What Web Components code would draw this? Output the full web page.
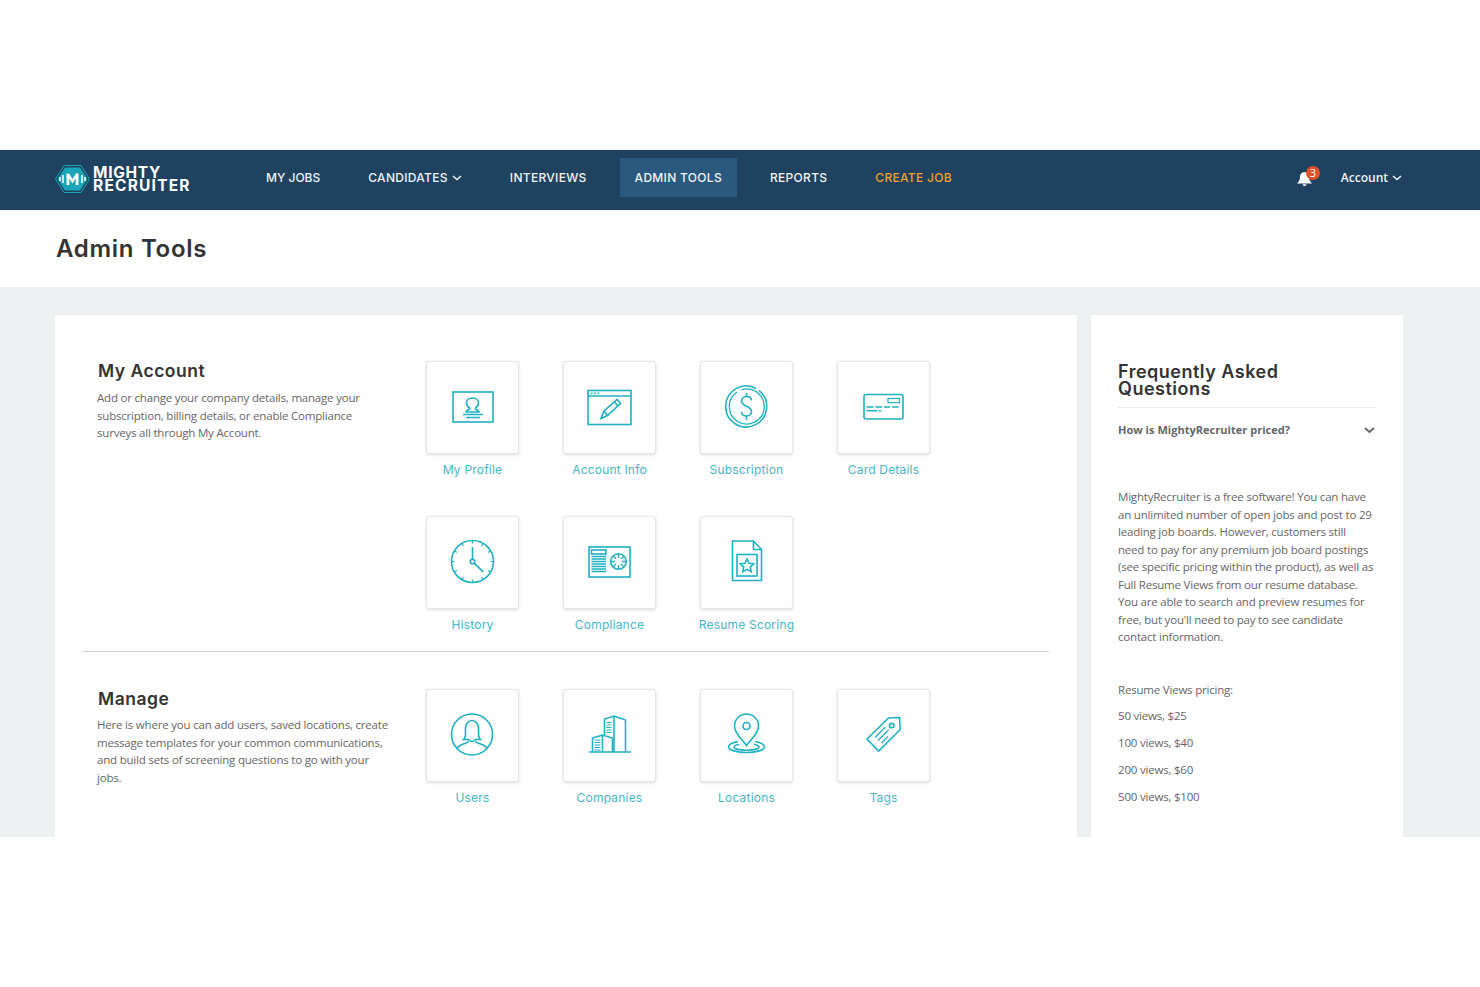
<!DOCTYPE html>
<html lang="en">
<head>
<meta charset="utf-8">
<title>Admin Tools</title>
<style>
  html, body { margin: 0; background: #fff; }
  body { font-family: "Open Sans", "Liberation Sans", sans-serif; }
  mr-app { height: 987px; }
</style>
</head>
<body>
<mr-app>
  <mr-navbar slot="nav"></mr-navbar>
  <mr-title slot="title">Admin Tools</mr-title>

  <mr-section heading="My Account">
    Add or change your company details, manage your<br>
    subscription, billing details, or enable Compliance<br>
    surveys all through My Account.
    <mr-tile slot="tiles" icon="profile">My Profile</mr-tile>
    <mr-tile slot="tiles" icon="account">Account Info</mr-tile>
    <mr-tile slot="tiles" icon="subscription">Subscription</mr-tile>
    <mr-tile slot="tiles" icon="card">Card Details</mr-tile>
    <mr-tile slot="tiles" icon="history">History</mr-tile>
    <mr-tile slot="tiles" icon="compliance">Compliance</mr-tile>
    <mr-tile slot="tiles" icon="scoring">Resume Scoring</mr-tile>
  </mr-section>

  <mr-section heading="Manage" last>
    Here is where you can add users, saved locations, create<br>
    message templates for your common communications,<br>
    and build sets of screening questions to go with your<br>
    jobs.
    <mr-tile slot="tiles" icon="users">Users</mr-tile>
    <mr-tile slot="tiles" icon="companies">Companies</mr-tile>
    <mr-tile slot="tiles" icon="locations">Locations</mr-tile>
    <mr-tile slot="tiles" icon="tags">Tags</mr-tile>
  </mr-section>

  <mr-faq slot="side" question="How is MightyRecruiter priced?">
    <p class="lead">MightyRecruiter is a free software! You can have<br>
    an unlimited number of open jobs and post to 29<br>
    leading job boards. However, customers still<br>
    need to pay for any premium job board postings<br>
    (see specific pricing within the product), as well as<br>
    Full Resume Views from our resume database.<br>
    You are able to search and preview resumes for<br>
    free, but you'll need to pay to see candidate<br>
    contact information.</p>
    <p>Resume Views pricing:</p>
    <p>50 views, $25</p>
    <p>100 views, $40</p>
    <p>200 views, $60</p>
    <p>500 views, $100</p>
  </mr-faq>
</mr-app>

<script>
const HEAD_FONT = '"Inter", "Liberation Sans", sans-serif';

const ICONS = {
  profile: `<rect x="26" y="31" width="40" height="30"/>
    <path d="M42.500 47c-2-1.300-3-3-3-5 0-3 2.500-5 6-5s6 2 6 5c0 2-1 3.700-3 5v1.500c2 .5 3.500 1 3.500 2.500h-13c0-1.500 1.500-2 3.500-2.500z"/>
    <path d="M36 53.500h20M39 56.500h14"/>`,
  account: `<rect x="24" y="29.500" width="43" height="34"/><path d="M24 35h43"/>
    <path d="M27 32.300h1.500M30.300 32.300h1.500M33.600 32.300h1.500" stroke-width="1.800"/>
    <path d="M40 50l13-11.500 3.500 4-13 12-6.500 3z"/><path d="M40 50l3.500 4.500M50.500 41l3.500 4"/>`,
  subscription: `<path d="M55 27.500a20.500 20.500 0 1 0 3 2"/><path d="M36 31a17.500 17.500 0 1 0 4-2" stroke-width="1.300"/>
    <path d="M50.500 39.500c0-2.500-2.200-4-5-4s-5 1.800-5 4.500c0 6 10 4.500 10 10.500 0 2.700-2.200 4.500-5 4.500s-5-1.500-5-4"/>
    <path d="M45.500 32v3.500M45.500 55v4"/>`,
  card: `<rect x="26" y="33.500" width="39" height="24.500" rx="2"/>
    <rect x="50" y="37.500" width="11.500" height="4.200" stroke-width="1.200"/>
    <path d="M28.500 46h7M37.500 46h6.500M46 46h6M54 46h6.500M28.500 49.700h10.500M40.700 49.700h2.600"/>`,
  history: `<circle cx="45.500" cy="45.500" r="21"/><circle cx="45.500" cy="45.500" r="2.300"/>
    <path d="M45.500 43v-12M47.200 47.200l9 8.700"/>
    <path d="M45.500 24.500v3M45.500 63.500v3M24.500 45.500h3M63.500 45.500h3M35 27.500l1.500 2.500M56 27.500l-1.500 2.500M27.500 35l2.500 1.500M63.500 35l-2.500 1.500M35 63.500l1.500-2.500M56 63.500l-1.500-2.500M27.500 56l2.500-1.500M63.500 56l-2.500-1.500" stroke-width="1.100"/>`,
  compliance: `<rect x="25" y="31" width="41" height="30"/><rect x="27.500" y="34" width="14.500" height="4"/>
    <path d="M27.500 40.500h14.500M27.500 43h14.500M27.500 45.500h14.500M27.500 48h14.500M27.500 50.500h14.500M27.500 53h14.500M27.500 55.500h14.500" stroke-width="1.300"/>
    <circle cx="54.500" cy="45.500" r="7.800"/>
    <path d="M54.500 38v4M54.500 49v4M47 45.500h4M58 45.500h4M49.200 40.200l2.800 2.800M57 48l2.800 2.800M59.800 40.200L57 43M52 48l-2.800 2.800" stroke-width="1.300"/>`,
  scoring: `<path d="M31.500 25h21l8 8.500v31h-29z"/><path d="M52.500 25v8.500h8"/>
    <rect x="36" y="38.500" width="20" height="21.500"/>
    <path d="M46 43l2 4.300 4.700.6-3.400 3.200.9 4.600-4.200-2.300-4.200 2.300.9-4.600-3.400-3.200 4.700-.6z"/>`,
  users: `<circle cx="45" cy="45.500" r="20.500"/>
    <path d="M36.500 50.500c1.500-1.500 2-3 2-5v-6.500c0-4 3-7.500 6.500-7.500s6.500 3.500 6.500 7.500v6.500c0 2 .5 3.500 2 5h-5c-1 1.200-2.300 1.800-3.500 1.800s-2.500-.6-3.500-1.800z"/>
    <path d="M41.500 52.200c-.8 1.800-3.500 2.300-6.500 3.300-2.700 1-4.500 2.700-5 4.500M48.500 52.200c.8 1.800 3.500 2.300 6.500 3.300 2.700 1 4.500 2.700 5 4.500"/>`,
  companies: `<path d="M25 63h42"/><path d="M40.500 46.500V30l9.500-3 11.500 4v32"/><path d="M50 27.500V63"/>
    <path d="M28.500 63V49l10-3 10 3v14M38.500 46.500V63"/>
    <path d="M42.500 33.500h5M42.500 36h5M42.500 38.500h5M42.500 41h5M42.500 43.500h5M30.500 51h6M30.500 53.500h6M30.500 56h6M30.500 58.500h6M30.500 61h6" stroke-width="1.200"/>`,
  locations: `<path d="M45.500 56.500c-3-5-12-11-12-19.500a12 12 0 0 1 24 0c0 8.500-9 14.500-12 19.500z"/>
    <circle cx="45.500" cy="37" r="3.500"/>
    <path d="M37 52.500c-5.500 1-9.500 3-9.500 5.500 0 3 8 5.500 18 5.500s18-2.500 18-5.500c0-2.500-4-4.500-9.500-5.500"/>
    <path d="M38 55.200c-3 .7-5 1.800-5 3 0 1.800 5.500 3 12.500 3s12.500-1.200 12.500-3c0-1.200-2-2.300-5-3"/>`,
  tags: `<path d="M29 50l21.500-21 11-.5.700 12-21.500 21.500z"/><circle cx="53.700" cy="36.500" r="2.300"/>
    <path d="M37 48.500l10.500-10.500M40 51.500l10.500-10.500M43.500 54l6.500-6.500" stroke-width="1.200"/>`
};

class MrApp extends HTMLElement {
  constructor() {
    super();
    this.attachShadow({ mode: "open" });
    this.shadowRoot.innerHTML = `
      <style>
        :host { display: block; padding-top: 150px; box-sizing: border-box; }
        .band { background: #edf1f2; height: 550px; overflow: hidden; box-sizing: border-box;
                padding: 28px 77px 0 55px; display: grid; grid-template-columns: 1022px 312px; gap: 14px; }
        .main { background: #fff; padding: 0 28px; height: 800px; }
      </style>
      <slot name="nav"></slot>
      <slot name="title"></slot>
      <div class="band">
        <div class="main"><slot></slot></div>
        <slot name="side"></slot>
      </div>`;
  }
}

class MrNavbar extends HTMLElement {
  constructor() {
    super();
    this.attachShadow({ mode: "open" });
    const chev = `<svg width="10" height="6" viewBox="0 0 10 6"><path d="M1 1l4 3.600L9 1" fill="none" stroke="currentColor" stroke-width="1.500"/></svg>`;
    this.shadowRoot.innerHTML = `
      <style>
        :host { display: flex; align-items: center; height: 60px; background: #1e425f; color: #fff;
                padding: 0 78px 0 55px; font-family: ${HEAD_FONT}; }
        .logo { display: flex; align-items: center; gap: 3px; width: 196px; margin-bottom: 2px; }
        .words { font-weight: 700; font-size: 15.500px; line-height: 13.500px; }
        .words b { font-weight: 700; letter-spacing: .7px; }
        .words span { letter-spacing: 1.200px; }
        nav { display: flex; gap: 18px; height: 39px; margin-bottom: 5px; }
        a { display: flex; align-items: center; gap: 4px; padding: 0 15px; font-size: 12px; font-weight: 500;
            letter-spacing: .3px; color: #f1f4f6; }
        a.tight { letter-spacing: 0; }
        a.on { background: #2a587e; }
        a.make { color: #f0a02c; }
        .right { margin-left: auto; margin-bottom: 5px; display: flex; align-items: center; }
        .bell { position: relative; width: 15px; height: 18px; margin-right: 29px; }
        .bell svg { display: block; margin-top: 2px; }
        .badge { position: absolute; left: 9px; top: -3px; width: 14px; height: 14px; border-radius: 50%;
                 background: #e0532a; color: #fff; font: 11px/14px "Open Sans", sans-serif; text-align: center; }
        .acct { display: flex; align-items: center; gap: 4px; font: 600 12px "Open Sans", sans-serif; color: #f1f4f6; }
      </style>
      <div class="logo">
        <svg width="35" height="28" viewBox="0 0 35 28">
          <path d="M9 .5h17L34.500 14 26 27.500H9L.5 14z" fill="none" stroke="#1aa5b8" stroke-width="1"/>
          <path d="M10 2.500h15L32.500 14 25 25.500H10L2.500 14z" fill="#1aa5b8"/>
          <path d="M11.500 20V8.500h2.500l3.500 5.500 3.500-5.500h2.500V20h-2.800v-6.500l-3.200 5-3.200-5V20z" fill="#fff"/>
          <path d="M5 12v4M8 10v8M27 10v8M30 12v4" stroke="#fff" stroke-width="1.500"/>
        </svg>
        <div class="words"><b>MIGHTY</b><br><span>RECRUITER</span></div>
      </div>
      <nav>
        <a class="tight">MY JOBS</a>
        <a>CANDIDATES ${chev}</a>
        <a>INTERVIEWS</a>
        <a class="on">ADMIN TOOLS</a>
        <a>REPORTS</a>
        <a class="make">CREATE JOB</a>
      </nav>
      <div class="right">
        <div class="bell">
          <svg width="15" height="16" viewBox="0 0 15 18" preserveAspectRatio="none"><path d="M7.500 1C4.500 1 3 3.500 3 6.500c0 3.500-1 5.500-3 7.500h15c-2-2-3-4-3-7.500C12 3.500 10.500 1 7.500 1zM5.500 15a2 2 0 0 0 4 0z" fill="#fff"/></svg>
          <span class="badge">3</span>
        </div>
        <div class="acct">Account ${chev}</div>
      </div>`;
  }
}

class MrTitle extends HTMLElement {
  constructor() {
    super();
    this.attachShadow({ mode: "open" });
    this.shadowRoot.innerHTML = `
      <style>
        :host { display: flex; align-items: center; height: 77px; padding: 0 0 0 56px;
                font: 600 24px ${HEAD_FONT}; letter-spacing: .7px; color: #333; }
      </style>
      <slot></slot>`;
  }
}

class MrSection extends HTMLElement {
  constructor() {
    super();
    this.attachShadow({ mode: "open" });
    this.shadowRoot.innerHTML = `
      <style>
        :host { display: grid; grid-template-columns: 329px 1fr; padding: 46px 0 18px 14px;
                border-bottom: 1px solid #cfd3d5; }
        :host([last]) { border-bottom: 0; padding-top: 37px; }
        h2 { margin: 0 0 8px 1px; font: 600 17.500px/20px ${HEAD_FONT}; color: #333; letter-spacing: .5px; }
        :host([last]) h2 { margin-bottom: 7px; }
        .copy { font-size: 11.500px; line-height: 17.500px; color: #666; letter-spacing: -.2px; }
        .tiles { display: grid; grid-template-columns: repeat(4, 93px); column-gap: 44px; row-gap: 38px; align-content: start; }
      </style>
      <div>
        <h2>${this.getAttribute("heading")}</h2>
        <div class="copy"><slot></slot></div>
      </div>
      <div class="tiles"><slot name="tiles"></slot></div>`;
  }
}

class MrTile extends HTMLElement {
  constructor() {
    super();
    this.attachShadow({ mode: "open" });
    this.shadowRoot.innerHTML = `
      <style>
        :host { display: flex; flex-direction: column; align-items: center; width: 93px; }
        .box { width: 93px; height: 93px; box-sizing: border-box; border: 1px solid #e6e6e6; border-radius: 3px;
               background: #fff; box-shadow: 0 1px 3px rgba(0,0,0,.14); }
        svg { display: block; margin: -1px 0 0 0; fill: none; stroke: #1fb0c1; stroke-width: 1.600; }
        .label { margin-top: 8px; font: 400 12px/16px ${HEAD_FONT}; color: #46b6c8; white-space: nowrap; letter-spacing: .2px; }
      </style>
      <div class="box"><svg width="93" height="93" viewBox="0 0 93 93">${ICONS[this.getAttribute("icon")]}</svg></div>
      <div class="label"><slot></slot></div>`;
  }
}

class MrFaq extends HTMLElement {
  constructor() {
    super();
    this.attachShadow({ mode: "open" });
    this.shadowRoot.innerHTML = `
      <style>
        :host { display: block; background: #fff; padding: 48px 28px 0 27px; height: 800px; white-space: nowrap;
                font-size: 11.500px; line-height: 17.500px; color: #666; letter-spacing: -.2px; }
        h2 { margin: 0; padding-bottom: 10px; border-bottom: 1px solid #e8eaeb;
             font: 600 18px/17px ${HEAD_FONT}; color: #333; letter-spacing: .5px; }
        .q { display: flex; justify-content: space-between; align-items: center; margin: 13px 0 49px;
             font-weight: 700; font-size: 11px; line-height: 18px; letter-spacing: .03px; color: #666; }
        ::slotted(p) { margin: 0 0 9.250px; }
        ::slotted(p.lead) { margin-bottom: 35px; }
      </style>
      <h2>Frequently Asked<br>Questions</h2>
      <div class="q">${this.getAttribute("question")}
        <svg width="11" height="7" viewBox="0 0 11 7"><path d="M1 1l4.500 4L10 1" fill="none" stroke="#666" stroke-width="2"/></svg>
      </div>
      <slot></slot>`;
  }
}

customElements.define("mr-app", MrApp);
customElements.define("mr-navbar", MrNavbar);
customElements.define("mr-title", MrTitle);
customElements.define("mr-section", MrSection);
customElements.define("mr-tile", MrTile);
customElements.define("mr-faq", MrFaq);
</script>
</body>
</html>
